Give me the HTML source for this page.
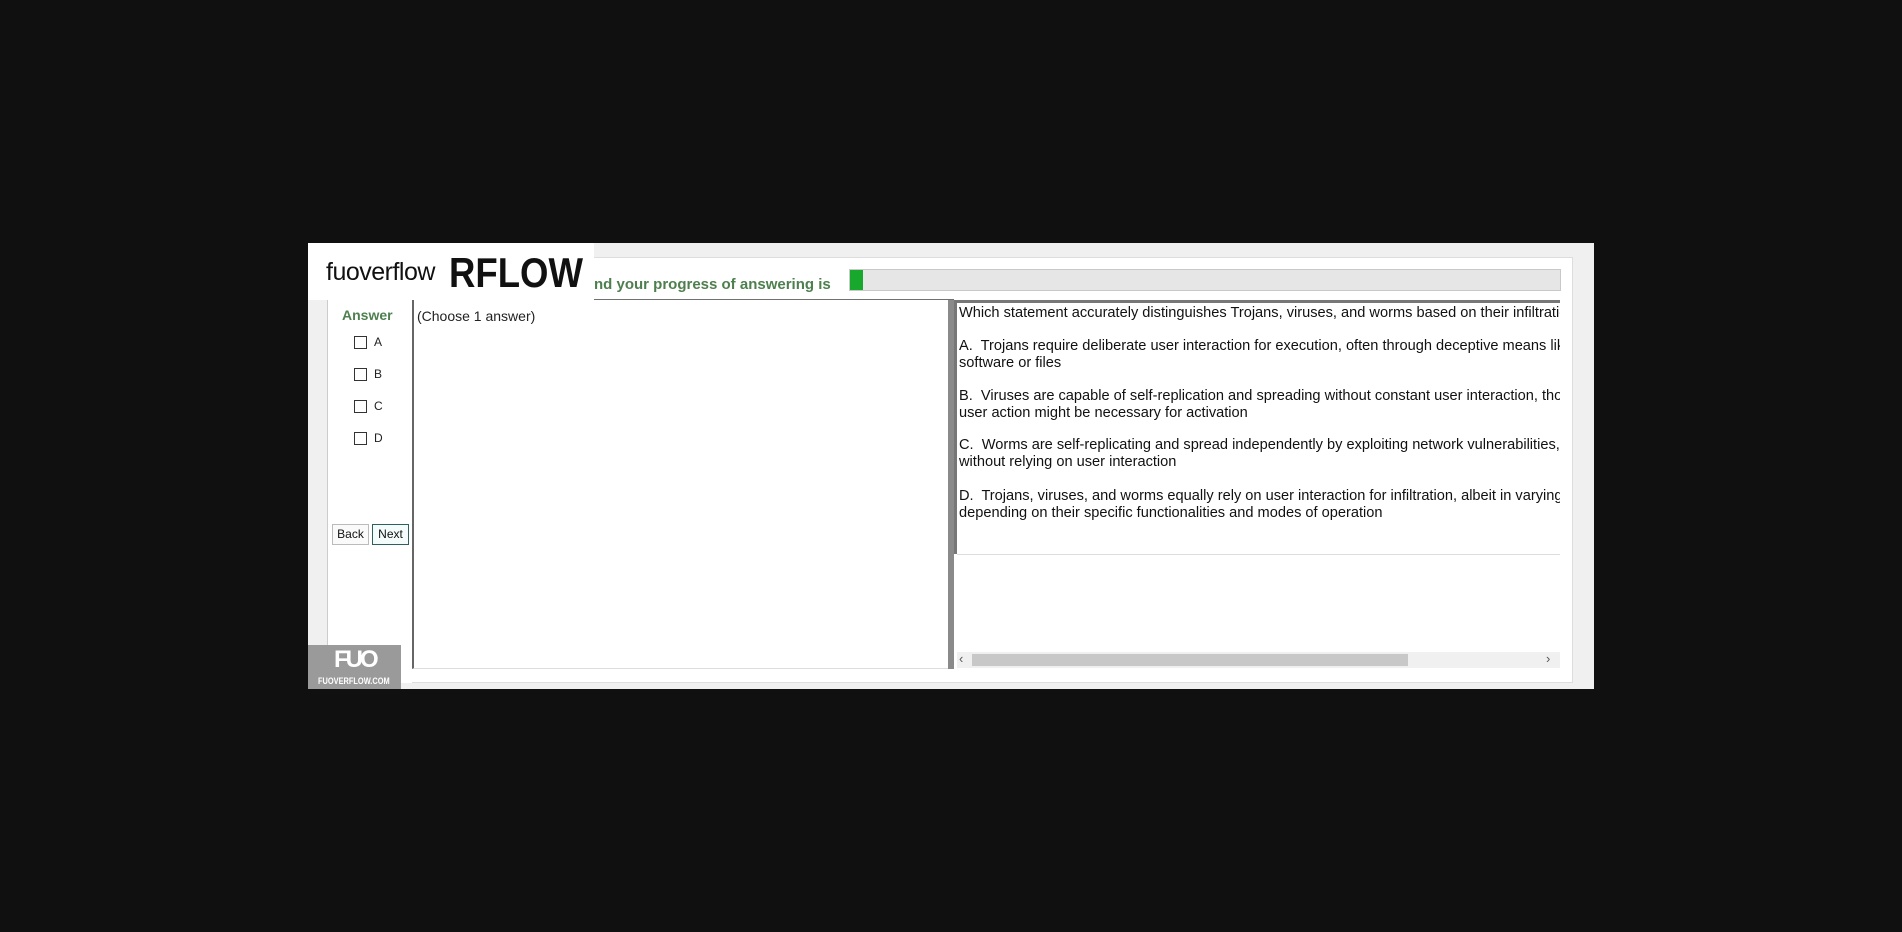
<!DOCTYPE html>
<html><head><meta charset="utf-8"><style>
*{margin:0;padding:0;box-sizing:border-box}
body{width:1902px;height:932px;background:#101010;position:relative;overflow:hidden;font-family:"Liberation Sans",Arial,sans-serif}
.a{position:absolute}
.cb{position:absolute;width:13px;height:13px;border:1px solid #333;background:#fff}
.lb{position:absolute;font-size:12px;color:#222}
.q{position:absolute;left:959px;font-size:14.6px;color:#111;white-space:nowrap;line-height:16.5px}
</style></head><body>
<div class="a" style="left:308px;top:243px;width:1286px;height:446px;background:#f0f0f0"></div>
<div class="a" style="left:327px;top:257px;width:1246px;height:426px;background:#fff;border:1px solid #ddd"></div>
<div class="a" style="left:327px;top:300px;width:85px;height:383px;background:#fff;border-left:1px solid #ccc"></div>
<!-- logo box -->
<div class="a" style="left:308px;top:243px;width:286px;height:57px;background:#fff"></div>
<div class="a" style="left:326px;top:258px;font-size:25px;color:#111;letter-spacing:-0.5px">fuoverflow</div>
<div class="a" style="left:449px;top:249px;font-size:42px;font-weight:bold;color:#111;transform:scaleX(0.87);transform-origin:left top">RFLOW</div>
<div class="a" style="left:594px;top:276px;font-size:15px;font-weight:bold;color:#4e7f4e">nd your progress of answering is</div>
<!-- progress -->
<div class="a" style="left:849px;top:269px;width:712px;height:22px;background:#e6e6e6;border:1px solid #c8c8c8"></div>
<div class="a" style="left:850px;top:270px;width:13px;height:20px;background:#18a82e"></div>
<div class="a" style="left:594px;top:299px;width:360px;height:2px;background:#707070"></div>
<!-- left -->
<div class="a" style="left:342px;top:307px;font-size:14px;font-weight:bold;color:#4e7f4e">Answer</div>
<div class="cb" style="left:354px;top:336px"></div><div class="lb" style="left:374px;top:335px">A</div>
<div class="cb" style="left:354px;top:368px"></div><div class="lb" style="left:374px;top:367px">B</div>
<div class="cb" style="left:354px;top:400px"></div><div class="lb" style="left:374px;top:399px">C</div>
<div class="cb" style="left:354px;top:432px"></div><div class="lb" style="left:374px;top:431px">D</div>
<div class="a" style="left:332px;top:524px;width:37px;height:21px;border:1px solid #bbb;background:#fafafa;font-size:12px;text-align:center;line-height:19px;color:#111">Back</div>
<div class="a" style="left:372px;top:524px;width:37px;height:21px;border:1px solid #2f5f5f;background:#f4fbfb;font-size:12px;text-align:center;line-height:19px;color:#111">Next</div>
<!-- middle -->
<div class="a" style="left:412px;top:300px;width:536px;height:369px;background:#fff;border-left:2px solid #666;border-bottom:1px solid #ddd"></div>
<div class="a" style="left:417px;top:308px;font-size:14px;color:#222">(Choose 1 answer)</div>
<div class="a" style="left:948px;top:300px;width:6px;height:369px;background:#8a8a8a"></div>
<!-- right -->
<div class="a" style="left:954px;top:300px;width:606px;height:369px;background:#fff;border-top:3px solid #777"></div>
<div class="a" style="left:954px;top:302px;width:3px;height:252px;background:#777"></div>
<div class="a" style="left:957px;top:554px;width:603px;height:1px;background:#ddd"></div>
<div class="a" style="left:957px;top:303px;width:603px;height:250px;overflow:hidden">
<div class="q" style="left:2px;top:2px">Which statement accurately distinguishes Trojans, viruses, and worms based on their infiltration</div>
<div class="q" style="left:2px;top:35px">A.&nbsp; Trojans require deliberate user interaction for execution, often through deceptive means like<br>software or files</div>
<div class="q" style="left:2px;top:85px">B.&nbsp; Viruses are capable of self-replication and spreading without constant user interaction, though<br>user action might be necessary for activation</div>
<div class="q" style="left:2px;top:134px">C.&nbsp; Worms are self-replicating and spread independently by exploiting network vulnerabilities,<br>without relying on user interaction</div>
<div class="q" style="left:2px;top:185px">D.&nbsp; Trojans, viruses, and worms equally rely on user interaction for infiltration, albeit in varying<br>depending on their specific functionalities and modes of operation</div>
</div>
<!-- scrollbar -->
<div class="a" style="left:957px;top:652px;width:603px;height:16px;background:#f0f0f0"></div>
<div class="a" style="left:972px;top:654px;width:436px;height:12px;background:#c8c8c8"></div>
<div class="a" style="left:959px;top:651px;font-size:13px;color:#555">‹</div>
<div class="a" style="left:1546px;top:651px;font-size:13px;color:#555">›</div>
<!-- FUO logo -->
<div class="a" style="left:308px;top:645px;width:93px;height:44px;background:#9a9a9a"></div>
<div class="a" style="left:334px;top:646px;font-size:24px;font-weight:bold;color:#fff;letter-spacing:-3px">FUO</div>
<div class="a" style="left:318px;top:676px;font-size:9.5px;font-weight:bold;color:#fff;transform:scaleX(0.78);transform-origin:left top">FUOVERFLOW.COM</div>
</body></html>
